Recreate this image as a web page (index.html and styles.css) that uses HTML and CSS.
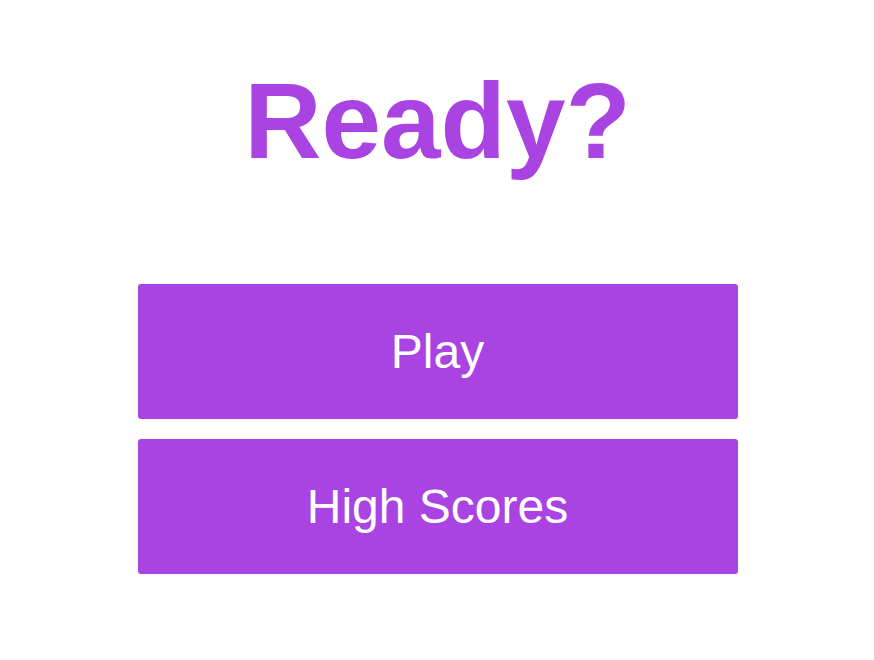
FILE: index.html
```html
<!DOCTYPE html>
<html lang="en">
<head>
<meta charset="utf-8">
<title>Ready?</title>
<link rel="stylesheet" href="styles.css">
</head>
<body>
<main class="screen">
  <h1 class="title">Ready?</h1>
  <div class="menu">
    <button class="menu-btn" type="button">Play</button>
    <button class="menu-btn" type="button">High Scores</button>
  </div>
</main>
</body>
</html>
```

FILE: styles.css
```css
html, body {
  margin: 0;
  padding: 0;
  background: #ffffff;
}

body {
  font-family: "Liberation Sans", Arial, sans-serif;
}

.screen {
  display: flex;
  flex-direction: column;
  align-items: center;
  padding-top: 68px;
  padding-left: 1px;
}

.title {
  margin: 0;
  font-size: 107px;
  line-height: 107px;
  font-weight: 700;
  color: #a944e2;
}

.menu {
  display: flex;
  flex-direction: column;
  gap: 20px;
  margin-top: 109px;
}

.menu-btn {
  width: 600px;
  height: 135px;
  border: none;
  border-radius: 3px;
  background: #a944e2;
  color: #ffffff;
  font-family: "Liberation Sans", Arial, sans-serif;
  font-size: 48px;
  font-weight: 400;
  padding: 0;
  cursor: pointer;
}
```
